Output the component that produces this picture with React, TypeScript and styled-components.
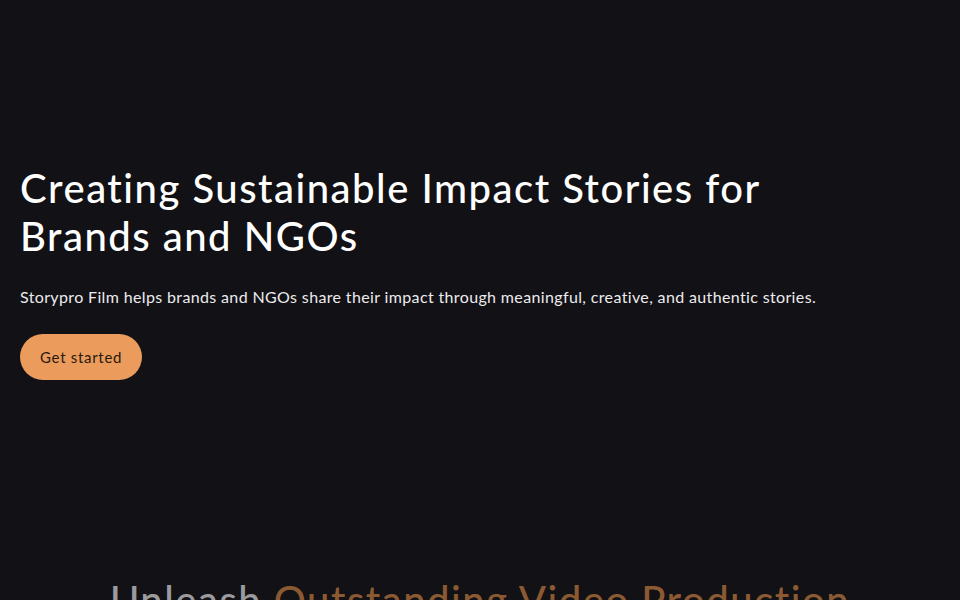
import React from 'react';
import styled, {createGlobalStyle} from "styled-components";

const GlobalStyle = createGlobalStyle`
  * {
    box-sizing: border-box;
  }

  body {
    margin: 0;
    background: #121115;
    color: #ffffff;
    font-family: Lato, "Noto Sans", sans-serif;
  }
`;

export const Page = styled.main`
  width: 100%;
  min-height: 600px;
  overflow: hidden;
`;

export const Hero = styled.section`
  height: 540px;
  display: flex;
  flex-direction: column;
  justify-content: center;
  padding: 0 20px;
`;

// Raleway isn't installed, so Lato gets a bit of tracking to reach the same widths
export const Title = styled.h1`
  margin: 0;
  padding-top: 4px;
  max-width: 780px;
  font-size: 40px;
  font-weight: 500;
  line-height: 48px;
  letter-spacing: 1.5px;
  color: #ffffff;
`;

export const Lead = styled.p`
  margin: 25px 0 0;
  font-size: 16px;
  line-height: 24px;
  letter-spacing: 0.36px;
  color: #ecebee;
`;

export const StartButton = styled.button`
  align-self: flex-start;
  margin-top: 25px;
  height: 46px;
  padding: 0 20px;
  border: none;
  border-radius: 23px;
  background: #eb9c5c;
  color: #2a1a0e;
  font-family: inherit;
  font-size: 15px;
  letter-spacing: 0.7px;
  cursor: pointer;
`;

export const Section = styled.section`
  padding: 36px 20px 0;
  text-align: center;
`;

export const SectionTitle = styled.h2`
  margin: 0;
  font-size: 40px;
  font-weight: 500;
  line-height: 48px;
  letter-spacing: 1.5px;
  color: #9b9a9d;
`;

export const Accent = styled.span`
  color: #8b5a32;
`;

export default function App() {
    return (
        <Page>
            <GlobalStyle/>
            <Hero>
                <Title>Creating Sustainable Impact Stories for Brands and NGOs</Title>
                <Lead>Storypro Film helps brands and NGOs share their impact through meaningful, creative, and authentic stories.</Lead>
                <StartButton>Get started</StartButton>
            </Hero>
            <Section>
                <SectionTitle>Unleash <Accent>Outstanding Video Production</Accent></SectionTitle>
            </Section>
        </Page>
    );
}
